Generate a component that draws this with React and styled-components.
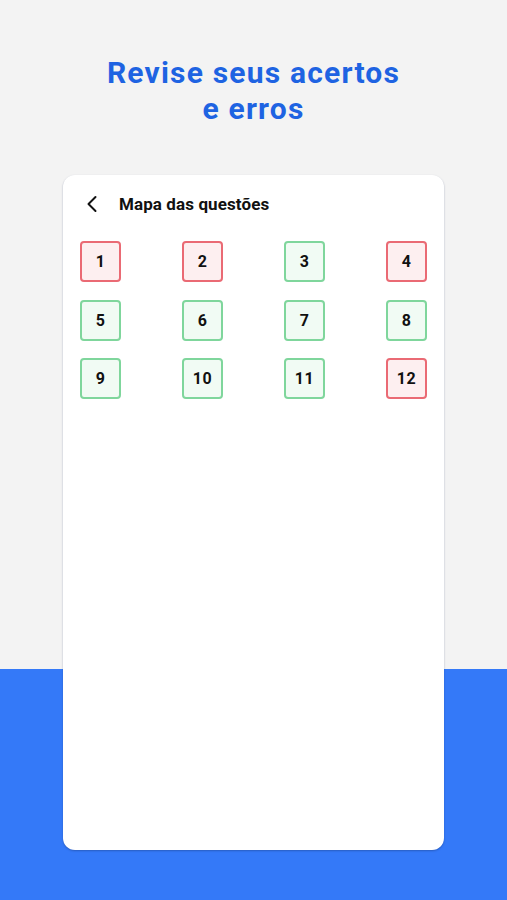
import { createGlobalStyle } from "styled-components"
import styled from "styled-components"

const questions = [
  { n: 1, ok: false },
  { n: 2, ok: false },
  { n: 3, ok: true },
  { n: 4, ok: false },
  { n: 5, ok: true },
  { n: 6, ok: true },
  { n: 7, ok: true },
  { n: 8, ok: true },
  { n: 9, ok: true },
  { n: 10, ok: true },
  { n: 11, ok: true },
  { n: 12, ok: false },
]

export default function App() {

  return (

    <Page>
      <GlobalStyle />

      <Title>Revise seus acertos<br />e erros</Title>

      <Card>

        <Header>
          <BackIcon viewBox="0 0 12 18" aria-hidden="true">
            <path d="M9.5 2 L2.5 9 L9.5 16" fill="none" stroke="#111" strokeWidth="2" strokeLinecap="round" strokeLinejoin="round" />
          </BackIcon>
          <HeaderTitle>Mapa das questões</HeaderTitle>
        </Header>

        <Grid>
          {questions.map(q => (
            <QuestionBox key={q.n} $ok={q.ok}>{q.n}</QuestionBox>
          ))}
        </Grid>

      </Card>

    </Page>

  )

}

//STYLES

const GlobalStyle = createGlobalStyle`
  * { box-sizing: border-box; }
  body {
    margin: 0;
    font-family: Roboto, "Liberation Sans", sans-serif;
  }
`
const Page = styled.div`
  display: flex;
  flex-direction: column;
  align-items: center;
  width: 100%;
  height: 900px;
  padding-top: 55px;
  background: linear-gradient(to bottom, #f3f3f3 0, #f3f3f3 669px, #3479f8 669px, #3479f8 100%);
  overflow: hidden;
`
const Title = styled.h1`
  margin: 0;
  font-size: 30px;
  line-height: 36px;
  font-weight: 700;
  letter-spacing: 1.2px;
  text-align: center;
  color: #1e63e2;
`
const Card = styled.div`
  display: flex;
  flex-direction: column;
  width: 381px;
  height: 675px;
  margin-top: 48px;
  padding: 18px 17px;
  background: #ffffff;
  border-radius: 12px;
  box-shadow: 0 1px 2px rgba(20, 40, 90, 0.35);
`
const Header = styled.div`
  display: flex;
  align-items: center;
  gap: 21px;
  height: 22px;
  padding-left: 6px;
`
const BackIcon = styled.svg`
  width: 12px;
  height: 18px;
`
const HeaderTitle = styled.span`
  font-size: 17px;
  font-weight: 700;
  letter-spacing: 0.1px;
  color: #111;
`
const Grid = styled.div`
  display: grid;
  grid-template-columns: repeat(4, 41px);
  justify-content: space-between;
  row-gap: 17.5px;
  margin-top: 26px;
`
const QuestionBox = styled.div`
  display: flex;
  align-items: center;
  justify-content: center;
  width: 41px;
  height: 41px;
  border-radius: 4px;
  border: 2px solid ${p => p.$ok ? "#7fd69c" : "#ea6a74"};
  background: ${p => p.$ok ? "#f1fbf4" : "#fdeff0"};
  font-size: 16px;
  font-weight: 700;
  letter-spacing: 0.5px;
  color: #111;
`
